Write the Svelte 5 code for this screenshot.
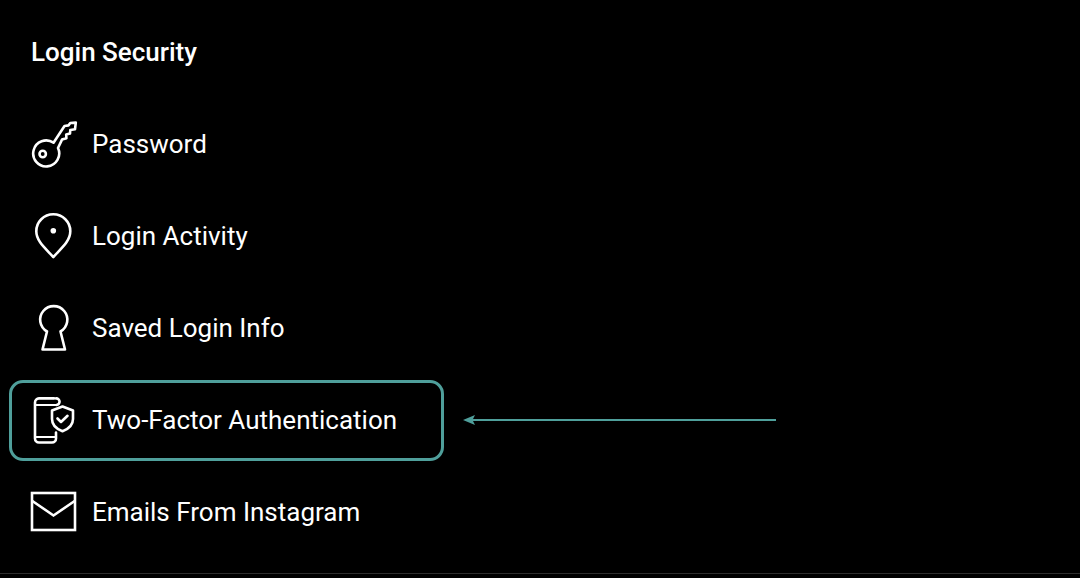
<script>
  const items = [
    { id: 'key', label: 'Password' },
    { id: 'pin', label: 'Login Activity' },
    { id: 'keyhole', label: 'Saved Login Info' },
    { id: 'phone', label: 'Two-Factor Authentication', marked: true },
    { id: 'mail', label: 'Emails From Instagram' },
  ];
</script>

<main>
  <h2>Login Security</h2>
  <ul>
    {#each items as item}
      <li class="row">
        {#if item.marked}
          <div class="mark" aria-hidden="true"></div>
          <svg class="arrow" width="314" height="14" viewBox="0 0 314 14" aria-hidden="true">
            <path d="M1 7 13 2 11 6H314v2H11L13 12z" fill="#4f9f9b" />
          </svg>
        {/if}
        <svg class="icon" width="48" height="48" viewBox="0 0 48 48" fill="none" stroke="#fff" stroke-width="2.6" stroke-linejoin="round" stroke-linecap="round" aria-hidden="true">
          {#if item.id === 'key'}
            <path d="M23.5 22.7 34.5 6 38.5 5.4 40.3 3 45.8 2.6 45 9.3 40.3 10 40 13.6 36.2 14.6 36.4 18.2 32 19.6 28 28A13 13 0 1 1 23.5 22.7Z" />
            <circle cx="12.7" cy="34" r="3.2" />
          {:else if item.id === 'pin'}
            <path d="M23.3 45C15 36 6.3 29 6.3 19.3A17 17 0 0 1 40.3 19.3C40.3 29 31.6 36 23.3 45Z" />
            <circle cx="23.3" cy="18.7" r="2.8" fill="#fff" stroke="none" />
          {:else if item.id === 'keyhole'}
            <path d="M17 27.5A13.6 13.6 0 1 1 30.5 27.5L35 45.5H12.5Z" />
          {:else if item.id === 'phone'}
            <path d="M24 2.4H9A4 4 0 0 0 5 6.4V42.5A4 4 0 0 0 9 46.5H22A4 4 0 0 0 26 42.5V36.5" />
            <path d="M5 9H26M5 41H26" stroke-width="2" />
            <path d="M26 2.4A3 3 0 0 1 26.5 9" />
            <path d="M32.5 10.5 43 14.5V23C43 29 38.5 33 32.5 35.2 26.5 33 22 29 22 23V14.5Z" />
            <path d="M27.5 22.5 31 26 37.5 19.8" />
          {:else}
            <rect x="2" y="5" width="43" height="37" stroke-linejoin="miter" />
            <path d="M2 12.7 23.5 27.5 45 12.7" stroke-linecap="butt" stroke-linejoin="miter" />
          {/if}
        </svg>
        <span>{item.label}</span>
      </li>
    {/each}
  </ul>
  <hr />
</main>

<style>
  :global(body) {
    background: #000;
  }

  main {
    height: 578px;
    background: #000;
    color: #fff;
    font-family: Roboto, sans-serif;
    overflow: hidden;
  }

  h2 {
    margin: 0;
    padding: 36px 0 0 31px;
    height: 63px;
    box-sizing: border-box;
    font-size: 26px;
    line-height: 32px;
    font-weight: 500;
  }

  ul {
    list-style: none;
    margin: 0;
    padding: 35px 0 0;
  }

  .row {
    position: relative;
    display: flex;
    align-items: center;
    gap: 14px;
    height: 92px;
    padding-left: 30px;
    font-size: 26px;
  }

  .icon {
    flex: none;
  }

  .mark {
    position: absolute;
    left: 9px;
    top: 6px;
    width: 435px;
    height: 81px;
    box-sizing: border-box;
    border: 3px solid #4f9f9b;
    border-radius: 14px;
  }

  .arrow {
    position: absolute;
    left: 462px;
    top: 39px;
  }

  hr {
    margin: 15px 0 0;
    border: 0;
    height: 1px;
    background: #2e2e2e;
  }
</style>
